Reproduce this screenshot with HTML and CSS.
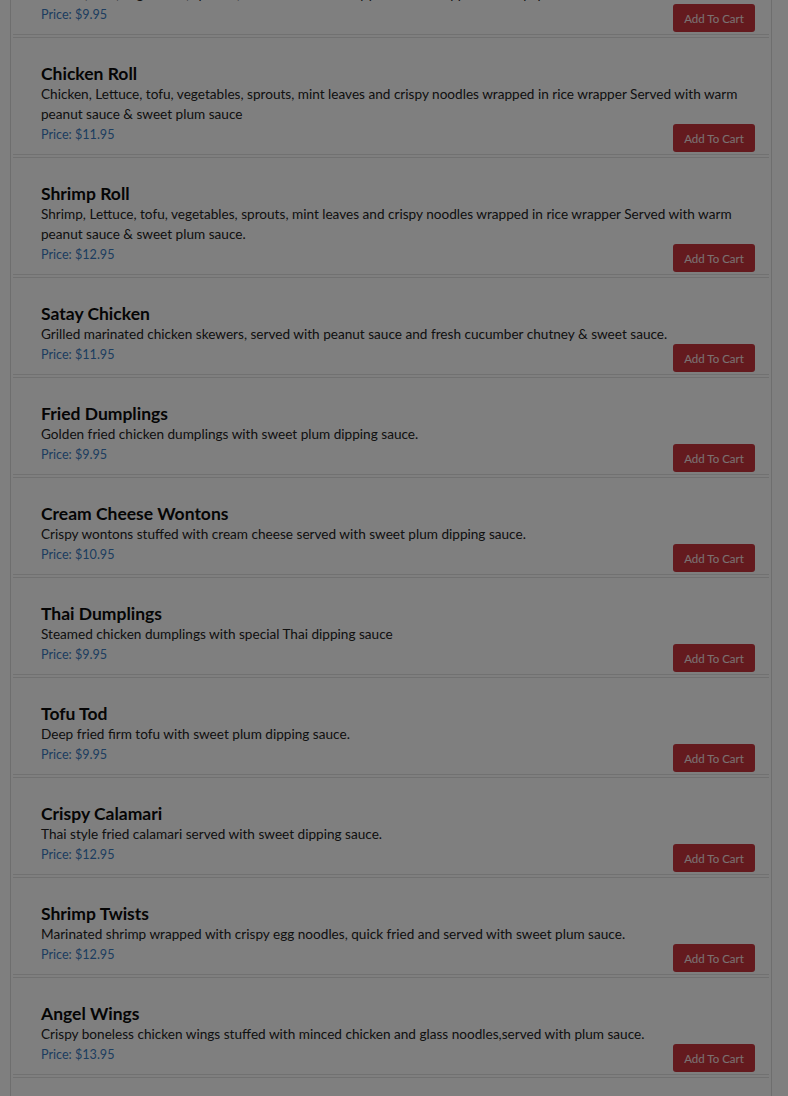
FILE: index.html
```html
<!DOCTYPE html>
<html>
<head>
<meta charset="utf-8">
<link rel="stylesheet" href="styles.css">
</head>
<body>
<div class="menu">
  <div class="item">
    <h3 class="name">Vegetable Roll</h3>
    <p class="desc">Lettuce, tofu, vegetables, sprouts, mint leaves and crispy noodles wrapped in rice paper.</p>
    <div class="foot"><span class="price">Price: $9.95</span><button class="btn">Add To Cart</button></div>
  </div>
  <div class="item">
    <h3 class="name">Chicken Roll</h3>
    <p class="desc">Chicken, Lettuce, tofu, vegetables, sprouts, mint leaves and crispy noodles wrapped in rice wrapper Served with warm peanut sauce &amp; sweet plum sauce</p>
    <div class="foot"><span class="price">Price: $11.95</span><button class="btn">Add To Cart</button></div>
  </div>
  <div class="item">
    <h3 class="name">Shrimp Roll</h3>
    <p class="desc">Shrimp, Lettuce, tofu, vegetables, sprouts, mint leaves and crispy noodles wrapped in rice wrapper Served with warm peanut sauce &amp; sweet plum sauce.</p>
    <div class="foot"><span class="price">Price: $12.95</span><button class="btn">Add To Cart</button></div>
  </div>
  <div class="item">
    <h3 class="name">Satay Chicken</h3>
    <p class="desc">Grilled marinated chicken skewers, served with peanut sauce and fresh cucumber chutney &amp; sweet sauce.</p>
    <div class="foot"><span class="price">Price: $11.95</span><button class="btn">Add To Cart</button></div>
  </div>
  <div class="item">
    <h3 class="name">Fried Dumplings</h3>
    <p class="desc">Golden fried chicken dumplings with sweet plum dipping sauce.</p>
    <div class="foot"><span class="price">Price: $9.95</span><button class="btn">Add To Cart</button></div>
  </div>
  <div class="item">
    <h3 class="name">Cream Cheese Wontons</h3>
    <p class="desc">Crispy wontons stuffed with cream cheese served with sweet plum dipping sauce.</p>
    <div class="foot"><span class="price">Price: $10.95</span><button class="btn">Add To Cart</button></div>
  </div>
  <div class="item">
    <h3 class="name">Thai Dumplings</h3>
    <p class="desc">Steamed chicken dumplings with special Thai dipping sauce</p>
    <div class="foot"><span class="price">Price: $9.95</span><button class="btn">Add To Cart</button></div>
  </div>
  <div class="item">
    <h3 class="name">Tofu Tod</h3>
    <p class="desc">Deep fried firm tofu with sweet plum dipping sauce.</p>
    <div class="foot"><span class="price">Price: $9.95</span><button class="btn">Add To Cart</button></div>
  </div>
  <div class="item">
    <h3 class="name">Crispy Calamari</h3>
    <p class="desc">Thai style fried calamari served with sweet dipping sauce.</p>
    <div class="foot"><span class="price">Price: $12.95</span><button class="btn">Add To Cart</button></div>
  </div>
  <div class="item">
    <h3 class="name">Shrimp Twists</h3>
    <p class="desc">Marinated shrimp wrapped with crispy egg noodles, quick fried and served with sweet plum sauce.</p>
    <div class="foot"><span class="price">Price: $12.95</span><button class="btn">Add To Cart</button></div>
  </div>
  <div class="item">
    <h3 class="name">Angel Wings</h3>
    <p class="desc">Crispy boneless chicken wings stuffed with minced chicken and glass noodles,served with plum sauce.</p>
    <div class="foot"><span class="price">Price: $13.95</span><button class="btn">Add To Cart</button></div>
  </div>
  <div class="item">
    <h3 class="name">Golden Triangles</h3>
    <p class="desc">Crispy puff pastry filled with curried chicken and potatoes.</p>
    <div class="foot"><span class="price">Price: $9.95</span><button class="btn">Add To Cart</button></div>
  </div>
</div>
<div class="backdrop"></div>
</body>
</html>
```
FILE: styles.css
```css
html, body {
  margin: 0;
  padding: 0;
  background: #fff;
  overflow: hidden;
}
body {
  font-family: Lato, "Noto Sans", sans-serif;
  color: #333;
}
.menu {
  margin: -62px 16px 0 10px;
  border-left: 1px solid #ddd;
  border-right: 1px solid #ddd;
  padding: 0 2px;
}
.item {
  padding: 26px 14px 2px 28px;
  border-bottom: 4px double #e2e2e2;
}
.name {
  margin: 0;
  font-size: 17.5px;
  line-height: 20px;
  font-weight: 700;
  color: #0a0a0a;
}
.desc {
  margin: 0;
  font-size: 13.6px;
  line-height: 20px;
  color: #222;
}
.foot {
  display: flex;
  justify-content: space-between;
  align-items: flex-start;
  height: 28px;
}
.price {
  padding-top: 1px;
  font-size: 12.6px;
  line-height: 20px;
  color: #3a7bc0;
}
.btn {
  border: none;
  border-radius: 3px;
  background: #c9353d;
  color: #f4e4e4;
  font-family: inherit;
  font-size: 11.5px;
  height: 28px;
  width: 82px;
  padding: 0;
}
.backdrop {
  position: fixed;
  inset: 0;
  background: rgba(0, 0, 0, 0.5);
}
```
